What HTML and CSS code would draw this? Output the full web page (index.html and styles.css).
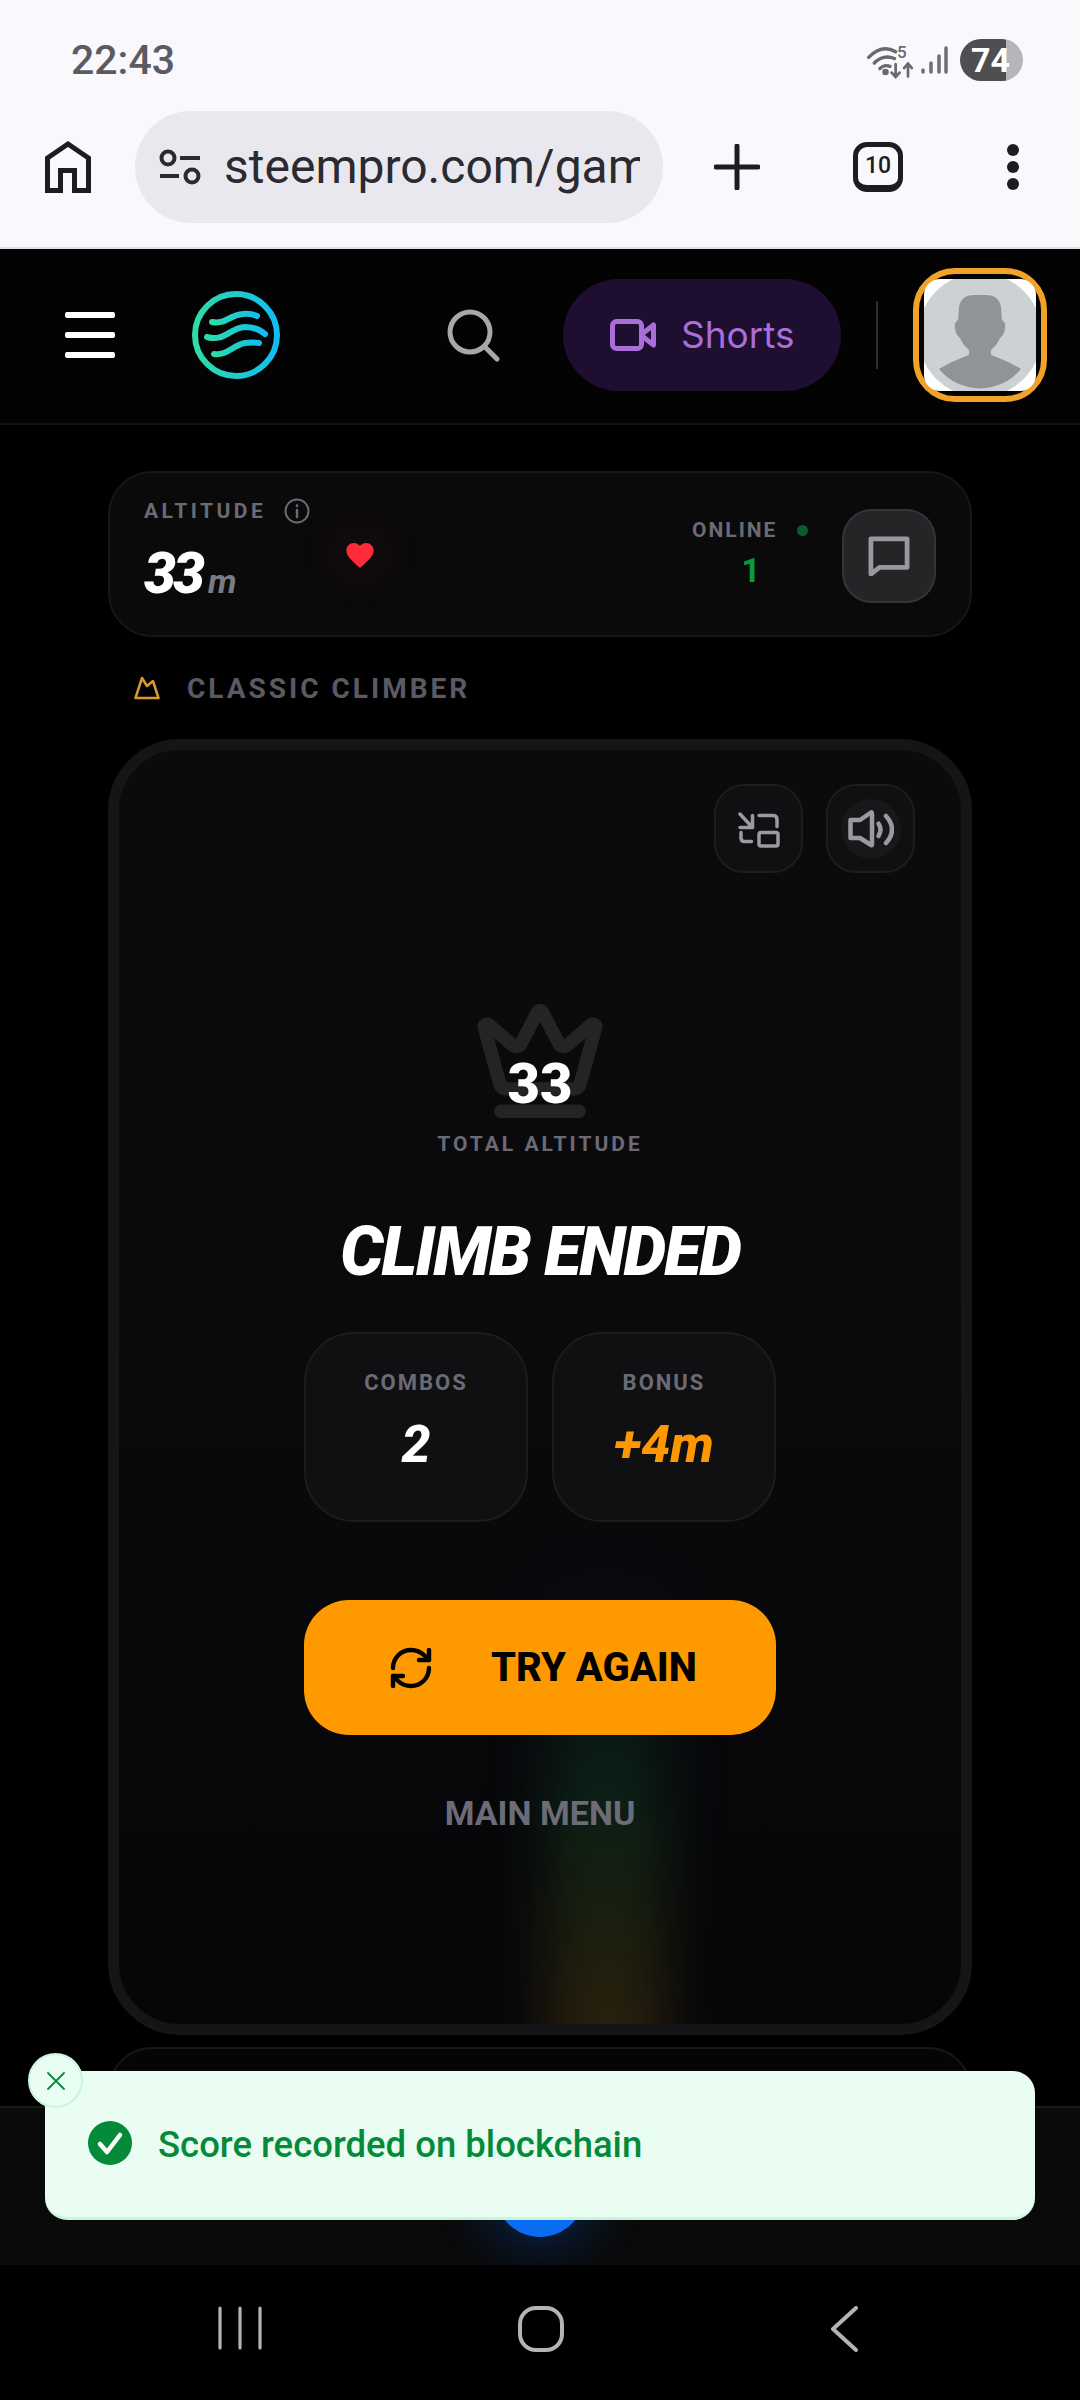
FILE: index.html
```html
<!DOCTYPE html>
<html lang="en">
<head>
<meta charset="utf-8">
<title>Steempro Climber</title>
<link rel="stylesheet" href="styles.css">
</head>
<body>
<div class="device">
  <div class="chrome">
    <div class="status">
      <span class="clock">22:43</span>
      <div class="status-icons">
        <svg class="wifi" viewBox="0 0 40 32" fill="none" stroke="#6a6a6e" stroke-width="3" stroke-linecap="round"><path d="M1 11Q13 -1 25 6"/><path d="M6 16Q14 8 24 12"/><path d="M11 21Q15 17 20 19"/><circle cx="16" cy="24" r="1.4" fill="#6a6a6e"/><path d="M25 17v11m-3.500-3.500 3.500 4 3.500-4M36 28V17m-3.500 3.500 3.500-4 3.500 4" stroke-width="2.400"/></svg>
        <span class="wifi-5">5</span>
        <svg class="signal" viewBox="0 0 27 28" fill="none" stroke="#6f6f73" stroke-width="3.500" stroke-linecap="round"><path d="M2 26v-2M10 26v-9M18 26V10M25 26V2"/></svg>
        <span class="battery">74</span>
      </div>
    </div>
    <div class="toolbar">
      <svg class="home-ic" viewBox="0 0 46 52" fill="none" stroke="#1c1c22" stroke-width="5"><path d="M2.500 49.500V17L23 3 43.500 17V49.500H29.500V29.500H15.500V49.500Z"/></svg>
      <div class="url">
        <svg class="tune-ic" viewBox="0 0 42 36" fill="none" stroke="#2a2a30" stroke-width="4" stroke-linecap="butt"><circle cx="9" cy="9" r="6.500"/><path d="M21 9h20M1 27h19"/><circle cx="33" cy="27" r="6.500"/></svg>
        <span class="url-text">steempro.com/game</span>
      </div>
      <svg class="plus-ic" viewBox="0 0 46 46" fill="none" stroke="#1c1c22" stroke-width="5" stroke-linecap="round"><path d="M23 2v42M2 23h42"/></svg>
      <div class="tabs">10</div>
      <div class="dots"><i></i><i></i><i></i></div>
    </div>
  </div>

  <div class="viewport">
    <header class="site-head">
      <div class="burger"><i></i><i></i><i></i></div>
      <svg class="logo" viewBox="0 0 90 90" fill="none" stroke-width="6" stroke-linecap="round">
        <defs><linearGradient id="lg" x1="0" y1="0" x2="1" y2="0"><stop offset="0" stop-color="#2fdca6"/><stop offset="1" stop-color="#12bdf0"/></linearGradient></defs>
        <circle cx="45" cy="45" r="41" stroke="url(#lg)"/>
        <path d="M21 32C34 35 38 25 52 24Q60 23 66 26" stroke="url(#lg)"/>
        <path d="M16 47C34 52 38 38 54 37Q66 37 74 44" stroke="url(#lg)"/>
        <path d="M23 64C36 66 42 55 54 53Q62 52 68 53" stroke="url(#lg)"/>
      </svg>
      <svg class="search-ic" viewBox="0 0 54 54" fill="none" stroke="#a8a8a8" stroke-width="5" stroke-linecap="round"><circle cx="23" cy="24" r="20"/><path d="M38 39 50 51"/></svg>
      <div class="shorts">
        <svg class="video-ic" viewBox="0 0 46 32" fill="none" stroke="#a96ed8" stroke-width="5" stroke-linejoin="round"><rect x="2.500" y="2.500" width="29" height="27" rx="4"/><path d="M32 15 43.500 6V26L32 17"/></svg>
        <span class="shorts-text">Shorts</span>
      </div>
      <span class="head-sep"></span>
      <div class="avatar">
        <svg class="avatar-pic" viewBox="0 0 112 112">
          <rect width="112" height="112" fill="#fff"/>
          <circle cx="56" cy="56" r="62" fill="#ced1d4"/>
          <path fill="#909496" d="M35 28Q37 16 50 16H62Q75 16 77 28L78 41Q82 43 81 50Q80 56 76 59Q73 66 67 71V76Q84 82 97 90A53 53 0 0 1 15 90Q28 82 45 76V71Q39 66 36 59 32 56 31 50 30 43 34 41Z"/>
        </svg>
      </div>
    </header>

    <main class="content">
      <section class="score-card">
        <div class="alt-col">
          <div class="alt-label">ALTITUDE
            <svg class="info-ic" viewBox="0 0 26 26" fill="none" stroke="#6b6b76" stroke-width="2" stroke-linecap="round"><circle cx="13" cy="13" r="11.500"/><path d="M13 12v7" stroke-width="2.500"/><path d="M13 7.500v.5" stroke-width="2.500"/></svg>
          </div>
          <div class="alt-value">33<span class="alt-unit">m</span></div>
        </div>
        <svg class="heart" viewBox="2 3 20 18.350"><path fill="#ff2b3a" d="M12 21.350l-1.450-1.320C5.400 15.360 2 12.280 2 8.500 2 5.420 4.420 3 7.500 3c1.740 0 3.410.81 4.500 2.090C13.090 3.810 14.760 3 16.500 3 19.580 3 22 5.420 22 8.500c0 3.780-3.400 6.860-8.550 11.540L12 21.350z"/></svg>
        <div class="online">
          <div class="online-label">ONLINE<i class="online-dot"></i></div>
          <div class="online-num">1</div>
        </div>
        <button class="chat-btn" type="button">
          <svg class="chat-ic" viewBox="0 0 44 42" fill="none" stroke="#98989e" stroke-width="5" stroke-linejoin="round"><path d="M3 3H41V33H12L3 40Z"/></svg>
        </button>
      </section>

      <div class="mode-row">
        <svg class="mode-ic" viewBox="0 0 26 24" fill="none" stroke="#d99a2b" stroke-width="2.500" stroke-linejoin="round"><path d="M1.500 22 8 2 13 10 19 5 24.500 22Z"/></svg>
        <span>CLASSIC CLIMBER</span>
      </div>

      <section class="game-card">
        <div class="trail"></div>
        <div class="game-body">
          <div class="game-tools">
            <button class="tool-btn" type="button">
              <svg class="tool-ic" viewBox="0 0 42 38" fill="none" stroke="#9a9aa0" stroke-width="3.500" stroke-linecap="round" stroke-linejoin="round"><path d="M2 4 14.500 17.500M2 17.500H14.500V5.500"/><path d="M21 5.500H35Q39 5.500 39 9.500V16.500M3 22.500V28Q3 31.500 6.500 31.500H13.500"/><rect x="21" y="22.500" width="19" height="13.500" rx="2"/></svg>
            </button>
            <button class="tool-btn" type="button">
              <span class="sound-halo">
                <svg class="sound-ic" viewBox="0 0 46 40" fill="none" stroke="#9a9aa0" stroke-width="4.500" stroke-linecap="round" stroke-linejoin="round"><path d="M23 3.500Q24 3 24 5V35Q24 37 23 36L12 29H2.500V11H12Z"/><path d="M30.500 14.500Q34.500 20.500 30.500 27"/><path d="M38 7Q50 20.500 38 34"/></svg>
              </span>
            </button>
          </div>

          <div class="hero">
            <svg class="hero-crown" viewBox="0 0 24 24" fill="none" stroke="#242426" stroke-width="2.400" stroke-linecap="round" stroke-linejoin="round"><path d="M11.562 3.266a.5.5 0 0 1 .876 0L15.390 8.870a1 1 0 0 0 1.516.294L21.183 5.500a.5.5 0 0 1 .798.519l-2.834 10.246a1 1 0 0 1-.956.734H5.810a1 1 0 0 1-.957-.734L2.020 6.020a.5.5 0 0 1 .798-.519l4.276 3.664a1 1 0 0 0 1.516-.294z"/><path d="M5 21h14"/></svg>
            <div class="hero-num">33</div>
          </div>
          <div class="hero-label">TOTAL ALTITUDE</div>
          <h1 class="ended">CLIMB ENDED</h1>

          <div class="stats">
            <div class="stat">
              <div class="stat-label">COMBOS</div>
              <div class="stat-value">2</div>
            </div>
            <div class="stat">
              <div class="stat-label">BONUS</div>
              <div class="stat-value stat-orange">+4m</div>
            </div>
          </div>

          <button class="retry" type="button">
            <svg class="retry-ic" viewBox="0 0 24 24" fill="none" stroke="#000" stroke-width="2.200" stroke-linecap="round" stroke-linejoin="round"><path d="M3 12a9 9 0 0 1 9-9 9.750 9.750 0 0 1 6.740 2.740L21 8"/><path d="M21 3v5h-5"/><path d="M21 12a9 9 0 0 1-9 9 9.750 9.750 0 0 1-6.740-2.740L3 16"/><path d="M8 16H3v5"/></svg>
            <span>TRY AGAIN</span>
          </button>
          <div class="menu-link">MAIN MENU</div>
        </div>
      </section>

      <section class="next-card"></section>
    </main>

    <nav class="bottom-nav"><span class="nav-fab"></span></nav>

    <div class="toast">
      <span class="toast-close">
        <svg class="close-ic" viewBox="0 0 20 20" fill="none" stroke="#058a3a" stroke-width="1.800" stroke-linecap="round"><path d="M2 2 18 18M18 2 2 18"/></svg>
      </span>
      <svg class="check-ic" viewBox="0 0 44 44"><circle cx="22" cy="22" r="22" fill="#058a3a"/><path d="M12 23 19 31 32 14" fill="none" stroke="#fff" stroke-width="4.500" stroke-linecap="round" stroke-linejoin="round"/></svg>
      <span class="toast-text">Score recorded on blockchain</span>
    </div>
  </div>

  <div class="sys-nav">
    <svg class="sys-recents" viewBox="0 0 44 44" fill="none" stroke="#b4b4b4" stroke-width="3.200" stroke-linecap="round"><path d="M2 2V42M22 2V42M42 2V42"/></svg>
    <svg class="sys-home" viewBox="0 0 46 46" fill="none" stroke="#b4b4b4" stroke-width="4"><rect x="2" y="2" width="42" height="42" rx="16"/></svg>
    <svg class="sys-back" viewBox="0 0 28 46" fill="none" stroke="#b4b4b4" stroke-width="4" stroke-linecap="round" stroke-linejoin="round"><path d="M26 2 3 23 26 44"/></svg>
  </div>
</div>
</body>
</html>
```

FILE: styles.css
```css
* { box-sizing: border-box; }
html, body { margin: 0; padding: 0; background: #000; }
body { font-family: Roboto, "Noto Sans", sans-serif; }
button { border: 0; padding: 0; font: inherit; cursor: pointer; }

.device { width: 1080px; height: 2400px; display: flex; flex-direction: column; overflow: hidden; }

/* browser chrome */
.chrome { flex: none; height: 249px; background: #f8f8fd; border-bottom: 2px solid #e2e2e6; }
.status { height: 111px; display: flex; align-items: center; justify-content: space-between; padding: 8px 57px 0 71px; }
.clock { font-size: 41px; font-weight: 500; color: #5c5c60; }
.status-icons { display: flex; align-items: center; position: relative; }
.wifi { width: 46px; height: 36px; margin-top: 6px; }
.wifi-5 { position: absolute; left: 30px; top: 3px; font-size: 17px; font-weight: 500; color: #6a6a6e; }
.signal { width: 27px; height: 28px; margin-left: 8px; }
.battery { width: 63px; height: 42px; margin-left: 12px; border-radius: 21px; background: linear-gradient(90deg, #4f4f52 73%, #b5b5ba 73%); color: #fff; font-size: 34px; font-weight: 700; line-height: 42px; padding-left: 11px; }

.toolbar { height: 136px; display: flex; align-items: center; padding-bottom: 25px; }
.home-ic { width: 46px; height: 52px; margin-left: 45px; }
.url { width: 528px; height: 112px; margin-left: 44px; border-radius: 56px; background: #e8e8ee; display: flex; align-items: center; padding-left: 24px; }
.tune-ic { width: 42px; height: 36px; flex: none; }
.url-text { margin-left: 23px; width: 416px; overflow: hidden; white-space: nowrap; font-size: 48px; color: #2a2a30; }
.plus-ic { width: 46px; height: 46px; margin-left: 51px; }
.tabs { width: 50px; height: 50px; margin-left: 93px; border: 5px solid #1c1c22; border-bottom-width: 7px; border-radius: 14px; font-size: 23px; font-weight: 500; line-height: 38px; text-align: center; color: #1c1c22; }
.dots { display: flex; flex-direction: column; gap: 5px; margin-left: 104px; }
.dots i { display: block; width: 12px; height: 12px; border-radius: 50%; background: #1c1c22; }

/* page */
.viewport { flex: 1; position: relative; overflow: hidden; background: #000; }
.site-head { height: 176px; display: flex; align-items: center; border-bottom: 2px solid #121214; background: #030303; padding-bottom: 2px; }
.burger { display: flex; flex-direction: column; gap: 14px; margin-left: 65px; }
.burger i { display: block; width: 50px; height: 6px; border-radius: 2px; background: #fff; }
.logo { width: 90px; height: 90px; margin-left: 76px; }
.search-ic { width: 54px; height: 54px; margin-left: 166px; }
.shorts { width: 278px; height: 112px; margin-left: 62px; border-radius: 56px; background: #1e0f30; display: flex; align-items: center; gap: 25px; padding-left: 47px; color: #a96ed8; font-family: Inter, Roboto, sans-serif; font-size: 37px; }
.shorts-text { margin-top: -2px; }
.video-ic { width: 46px; height: 32px; }
.head-sep { width: 2px; height: 68px; margin-left: 35px; background: #2c2c2e; }
.avatar { width: 134px; height: 134px; margin-left: 35px; border: 6px solid #f0a22a; border-radius: 42px; padding: 5px; }
.avatar-pic { display: block; width: 112px; height: 112px; border-radius: 16px; }

.content { padding: 46px 108px 0; }
.score-card { height: 166px; border: 2px solid #17171a; border-radius: 44px; background: #0a0a0b; display: flex; align-items: flex-start; padding: 0 34px 0 34px; }
.alt-col { width: 202px; padding-top: 24px; flex: none; }
.alt-label { display: flex; align-items: center; gap: 18px; font-size: 21px; font-weight: 700; letter-spacing: 3.500px; color: #6b6b76; line-height: 28px; }
.info-ic { width: 26px; height: 26px; }
.alt-value { margin-top: 15px; font-size: 57px; font-weight: 900; font-style: italic; letter-spacing: -3px; line-height: 68px; color: #fff; }
.alt-unit { margin-left: 6px; font-size: 34px; font-weight: 700; letter-spacing: 0; color: #7b7b84; }
.heart { width: 28px; height: 25px; margin-top: 70px; flex: none; filter: drop-shadow(0 0 24px rgba(255,40,50,.3)); }
.online { margin-left: 318px; padding-top: 44px; width: 124px; flex: none; }
.online-label { display: flex; align-items: center; gap: 20px; font-size: 21px; font-weight: 700; letter-spacing: 2px; color: #6b6b76; line-height: 26px; }
.online-dot { width: 11px; height: 11px; flex: none; border-radius: 50%; background: #0a5c2c; }
.online-num { margin-top: 10px; padding-right: 6px; text-align: center; font-size: 33px; font-weight: 700; line-height: 36px; color: #0a9c3c; }
.chat-btn { width: 94px; height: 94px; margin: 36px 0 0 26px; flex: none; border: 2px solid #34343a; border-radius: 30px; background: #252528; display: flex; align-items: center; justify-content: center; }
.chat-ic { width: 42px; height: 40px; }

.mode-row { height: 102px; display: flex; align-items: center; padding-left: 26px; gap: 27px; font-size: 28px; font-weight: 700; letter-spacing: 3px; color: #5a5a64; }
.mode-ic { width: 26px; height: 24px; }

.game-card { position: relative; height: 1296px; border: 11px solid #151517; border-radius: 72px; overflow: hidden; background: linear-gradient(180deg, #0b0b0e 0%, #0a0a0d 40%, #060609 100%); }
.trail { position: absolute; left: 428px; top: 820px; width: 118px; height: 540px; filter: blur(28px); background: linear-gradient(180deg, rgba(30,30,120,0) 0%, rgba(30,40,110,.12) 10%, rgba(20,90,50,.3) 42%, rgba(70,70,20,.4) 70%, rgba(110,70,20,.42) 100%); }
.game-body { position: relative; display: flex; flex-direction: column; align-items: center; }
.game-tools { align-self: stretch; display: flex; justify-content: flex-end; gap: 23px; padding: 34px 46px 0 0; }
.tool-btn { width: 89px; height: 89px; border: 2px solid #1d1d20; border-radius: 30px; background: #101013; display: flex; align-items: center; justify-content: center; }
.tool-ic { width: 42px; height: 38px; }
.sound-halo { width: 60px; height: 60px; border-radius: 50%; background: #18181b; display: flex; align-items: center; justify-content: center; }
.sound-ic { width: 46px; height: 40px; flex: none; }

.hero { position: relative; width: 134px; height: 134px; margin-top: 121px; }
.hero-crown { display: block; width: 134px; height: 134px; }
.hero-num { position: absolute; left: 0; right: 0; top: 57px; text-align: center; font-size: 56px; font-weight: 900; line-height: 66px; color: #fff; }
.hero-label { margin-top: 3px; font-size: 21px; font-weight: 700; letter-spacing: 3px; line-height: 26px; color: #6b6b76; }
.ended { margin: 55px 0 0; font-size: 68px; font-weight: 900; font-style: italic; letter-spacing: -2px; line-height: 80px; color: #fff; }
.stats { display: flex; gap: 24px; margin-top: 40px; }
.stat { width: 224px; height: 190px; border: 2px solid #1c1c1f; border-radius: 50px; background: #101012; display: flex; flex-direction: column; align-items: center; padding-top: 34px; }
.stat-label { font-size: 22px; font-weight: 700; letter-spacing: 2px; line-height: 30px; color: #6b6b76; }
.stat-value { margin-top: 17px; font-size: 52px; font-weight: 800; font-style: italic; line-height: 60px; color: #fff; }
.stat-orange { color: #ff9800; }
.retry { width: 472px; height: 135px; margin-top: 78px; border-radius: 45px; background: #ff9900; display: flex; align-items: center; gap: 56px; padding-left: 83px; color: #000; font-size: 40px; font-weight: 800; }
.retry-ic { width: 48px; height: 48px; }
.menu-link { margin-top: 56px; font-size: 34px; font-weight: 700; line-height: 44px; color: #6c6c78; }

.next-card { height: 240px; margin-top: 12px; border: 2px solid #18181a; border-radius: 44px; background: #050505; }

/* overlays */
.bottom-nav { position: absolute; left: 0; right: 0; bottom: 0; height: 159px; background: #0a0a0a; border-top: 2px solid #1a1a1a; display: flex; justify-content: center; overflow: hidden; }
.nav-fab { width: 90px; height: 90px; margin-top: 39px; border-radius: 50%; background: #0a6cf0; box-shadow: 0 0 50px 12px rgba(10,90,220,.3); }
.toast { position: absolute; left: 45px; top: 1822px; width: 990px; height: 149px; border-bottom: 3px solid #c8f5dc; border-radius: 22px; background: #e9fdf2; display: flex; align-items: center; gap: 26px; padding: 0 0 0 65px; }
.toast-close { position: absolute; left: -17px; top: -18px; width: 55px; height: 55px; border: 2px solid #c8f5dc; border-radius: 50%; background: #e9fdf2; display: flex; align-items: center; justify-content: center; }
.close-ic { width: 20px; height: 20px; }
.check-ic { width: 44px; height: 44px; flex: none; margin-top: -3px; margin-left: -22px; }
.toast-text { font-size: 36.500px; font-weight: 500; color: #058a3a; }

.sys-nav { flex: none; height: 135px; background: #000; display: flex; align-items: flex-start; padding-top: 41px; }
.sys-recents { width: 44px; height: 44px; margin-left: 218px; }
.sys-home { width: 46px; height: 46px; margin-left: 256px; }
.sys-back { width: 28px; height: 46px; margin-left: 266px; }
```
